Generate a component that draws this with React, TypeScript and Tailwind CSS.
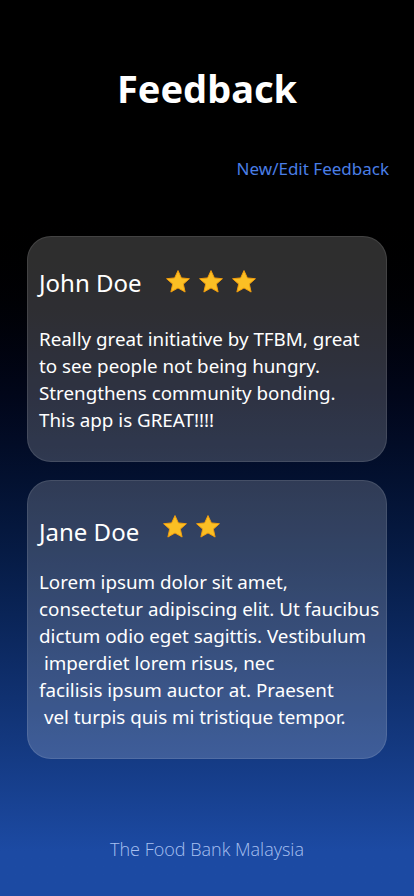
import React from "react";

type Review = {
  name: string;
  stars: number;
  text: string;
};

const reviews: Review[] = [
  {
    name: "John Doe",
    stars: 3,
    text: "Really great initiative by TFBM, great\nto see people not being hungry.\nStrengthens community bonding.\nThis app is GREAT!!!!",
  },
  {
    name: "Jane Doe",
    stars: 2,
    text: "Lorem ipsum dolor sit amet,\nconsectetur adipiscing elit. Ut faucibus dictum odio eget sagittis. Vestibulum\n imperdiet lorem risus, nec\nfacilisis ipsum auctor at. Praesent\n vel turpis quis mi tristique tempor.",
  },
];

const Star = () => (
  <svg viewBox="0 0 24 24" className="w-[28px] h-[28px]">
    <path
      d="M12 2.2l2.9 6.3 6.9.7-5.2 4.6 1.5 6.8L12 17.1l-6.1 3.5 1.5-6.8-5.2-4.6 6.9-.7z"
      fill="#fbbf24"
      stroke="#f59e0b"
      strokeWidth="0.8"
      strokeLinejoin="round"
    />
  </svg>
);

const ReviewCard = ({ review, tall }: { review: Review; tall?: boolean }) => (
  <div
    className={
      "rounded-[24px] bg-white/[0.18] border border-white/10 pl-[11px] pr-[6px] pb-[27px] " +
      (tall ? "pt-[39px]" : "pt-[33px]")
    }
  >
    <div className="flex items-center gap-[22px]">
      <span className="text-[24px] text-white leading-none">{review.name}</span>
      <div className={"flex gap-[5px] " + (tall ? "-mt-[10px]" : "-mt-[2px]")}>
        {Array.from({ length: review.stars }).map((_, i) => (
          <Star key={i} />
        ))}
      </div>
    </div>
    <p
      className={
        "text-[18.8px] leading-[27px] text-white whitespace-pre-wrap " +
        (tall ? "mt-[25px]" : "mt-[30px]")
      }
    >
      {review.text}
    </p>
  </div>
);

export default function App() {
  return (
    <div
      className="w-[414px] h-[896px] flex flex-col bg-gradient-to-b from-black from-[22%] to-[#1c4aa3] to-[95%]"
      style={{ fontFamily: '"Segoe UI", "Noto Sans", "Open Sans", sans-serif' }}
    >
      <h1 className="mt-[64px] text-center text-[38px] font-bold text-white leading-[48px]">
        Feedback
      </h1>
      <div className="mt-[44px] pr-[25px] text-right text-[17px] text-[#4a7ee6]">
        New/Edit Feedback
      </div>
      <div className="mt-[54px] px-[27px] flex flex-col gap-[18px]">
        <ReviewCard review={reviews[0]} />
        <ReviewCard review={reviews[1]} tall />
      </div>
      <div
        className="mt-auto mb-[33px] text-center text-[18px] font-light text-[#a8c0f0]"
        style={{ fontFamily: '"Open Sans", sans-serif' }}
      >
        The Food Bank Malaysia
      </div>
    </div>
  );
}
